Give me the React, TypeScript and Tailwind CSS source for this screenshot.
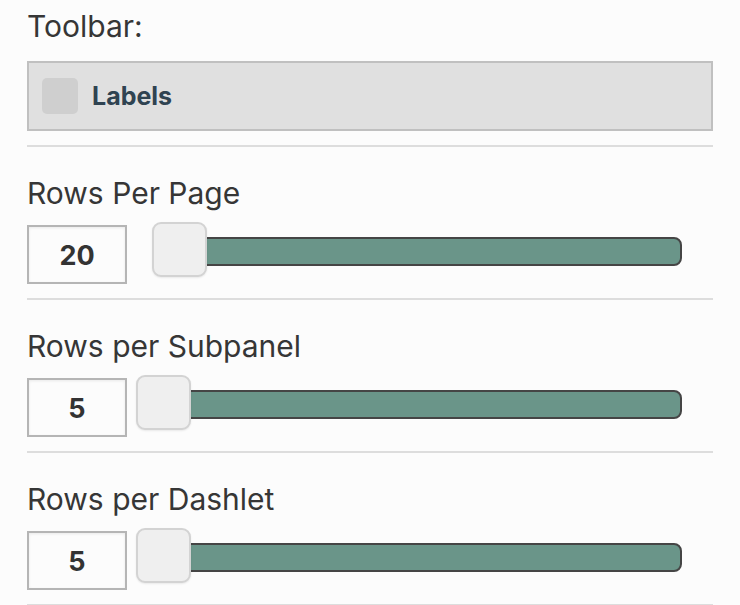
import React from "react";

type Row = { label: string; value: string; offset: number };

const rows: Row[] = [
  { label: "Rows Per Page", value: "20", offset: 16 },
  { label: "Rows per Subpanel", value: "5", offset: 0 },
  { label: "Rows per Dashlet", value: "5", offset: 0 },
];

function Slider({ offset }: { offset: number }) {
  return (
    <div className="relative ml-[9px] mt-[-3px] h-[55px] w-[546px]">
      <div
        className="absolute right-0 top-[15px] h-[29px] rounded-[8px] border-2 border-[#454545] bg-[#6a9589]"
        style={{ left: offset + 4 }}
      />
      <div
        className="absolute top-0 h-[55px] w-[55px] rounded-[9px] border-2 border-[#d3d3d3] bg-[#efefef] shadow-[0_1px_2px_rgba(0,0,0,0.08)]"
        style={{ left: offset }}
      />
    </div>
  );
}

export default function App() {
  return (
    <div className="h-[605px] w-[740px] overflow-hidden bg-[#fcfcfc] font-['Inter',sans-serif]">
      <div className="ml-[27px] w-[686px]">
        <div className="border-b-2 border-[#dddddd] pb-[14px] pt-[8px]">
          <div className="text-[30px] leading-[36px] text-[#363636]">Toolbar:</div>
          <div className="mt-[17px] flex h-[70px] items-center border-2 border-[#c0c0c0] bg-[#e0e0e0] pl-[13px]">
            <div className="h-[36px] w-[36px] rounded-[5px] bg-[#cfcfcf]" />
            <div className="ml-[14px] text-[25px] font-bold leading-[30px] text-[#2f4351]">Labels</div>
          </div>
        </div>
        {rows.map((r) => (
          <div key={r.label} className="border-b-2 border-[#dddddd] pb-[14px] pt-[28px]">
            <div className="text-[30px] leading-[36px] text-[#363636]">{r.label}</div>
            <div className="mt-[14px] flex items-start">
              <div className="flex h-[59px] w-[100px] items-center justify-center border-2 border-[#b5b5b5] bg-[#fcfcfc] pt-[3px] text-[27px] font-bold text-[#333333] shadow-[inset_0_1px_3px_rgba(0,0,0,0.08)]">
                {r.value}
              </div>
              <Slider offset={r.offset} />
            </div>
          </div>
        ))}
      </div>
    </div>
  );
}
